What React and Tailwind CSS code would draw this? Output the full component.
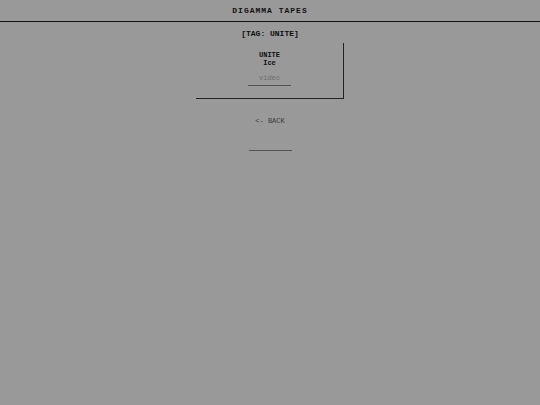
export default function App() {
  return (
    <div
      className="min-h-[405px] w-full bg-[#999999] text-[#111]"
      style={{ fontFamily: '"Liberation Mono", "Courier New", monospace' }}
    >
      {/* Header */}
      <header className="h-[22px] border-b border-[#111] flex items-center justify-center">
        <span className="text-[8px] leading-[8px] font-bold tracking-[1px]">DIGAMMA TAPES</span>
      </header>

      <main className="flex flex-col items-center">
        <h1 className="mt-[7px] text-[8px] leading-[10px] font-bold">[TAG: UNITE]</h1>

        {/* Tape card */}
        <div className="mt-[4px] w-[148px] border-r border-b border-[#222] flex flex-col items-center pt-[8px] pb-[12px]">
          <div className="text-[7px] leading-[8px] font-bold">UNITE</div>
          <div className="text-[7px] leading-[8px] font-bold">Ice</div>
          <div className="mt-[7px] text-[7px] leading-[8px] text-[#6e6e6e]">video</div>
          <div className="mt-[3px] w-[43px] h-px bg-[#555]" />
        </div>

        <a href="#" className="mt-[18px] text-[7px] leading-[8px] text-[#3a3a3a]">&lt;- BACK</a>
        <div className="mt-[25px] w-[43px] h-px bg-[#555]" />
      </main>
    </div>
  );
}
